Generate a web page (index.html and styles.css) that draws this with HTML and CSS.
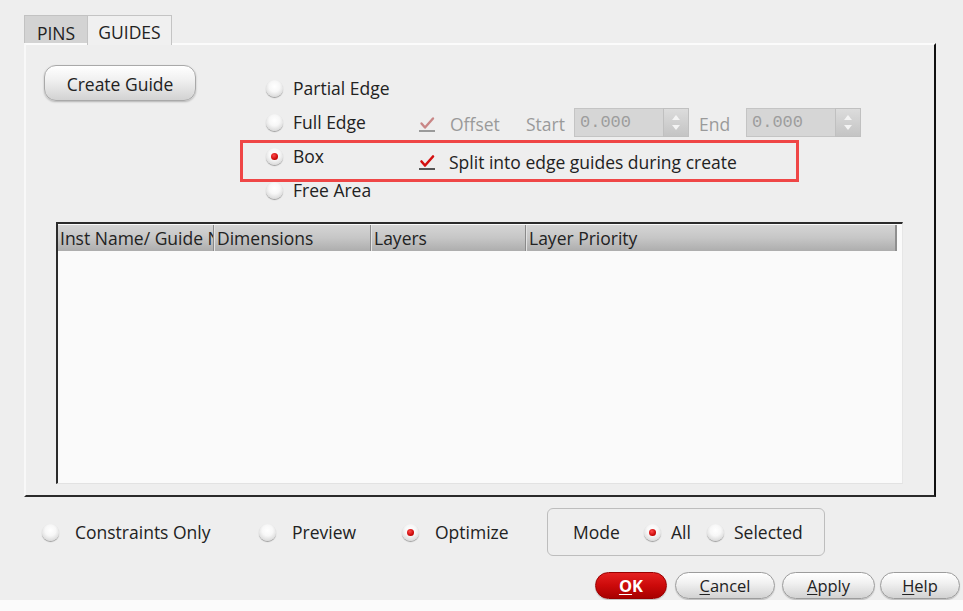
FILE: index.html
```html
<!DOCTYPE html>
<html>
<head>
<meta charset="utf-8">
<link rel="stylesheet" href="styles.css">
</head>
<body>
<div class="dialog">
  <div class="tabs">
    <div class="tab tab-off">PINS</div>
    <div class="tab tab-on">GUIDES</div>
  </div>
  <div class="panel">
    <div class="top">
      <button class="btn create">Create Guide</button>
      <div class="options">
        <div class="opt-row">
          <span class="radio-item"><span class="radio"></span>Partial Edge</span>
        </div>
        <div class="opt-row">
          <span class="radio-item wide"><span class="radio"></span>Full Edge</span>
          <span class="grp offset-grp">
            <span class="check dim"><svg width="18" height="18" viewBox="0 0 18 18"><rect x="1" y="15" width="16" height="2" fill="#9a9a9a"/><path d="M3.5 8.5 L7 12.5 L15 3.5" fill="none" stroke="#c98686" stroke-width="2.4" stroke-linecap="round" stroke-linejoin="round"/></svg></span>
            <span class="muted lbl-offset">Offset</span>
            <span class="muted lbl-start">Start</span>
            <span class="spin"><span class="spin-field">0.000</span><span class="spin-btn"><span class="up"></span><span class="down"></span></span></span>
            <span class="muted lbl-end">End</span>
            <span class="spin"><span class="spin-field">0.000</span><span class="spin-btn"><span class="up"></span><span class="down"></span></span></span>
          </span>
        </div>
        <div class="opt-row">
          <span class="radio-item wide"><span class="radio on"></span>Box</span>
          <span class="grp split-grp">
            <span class="check split"><svg width="18" height="18" viewBox="0 0 18 18"><rect x="1" y="15" width="16" height="2" fill="#555"/><path d="M3.5 8.5 L7 12.5 L15 3.5" fill="none" stroke="#d40f0f" stroke-width="2.6" stroke-linecap="round" stroke-linejoin="round"/></svg></span>
            <span>Split into edge guides during create</span>
          </span>
        </div>
        <div class="opt-row">
          <span class="radio-item"><span class="radio"></span>Free Area</span>
        </div>
        <div class="highlight"></div>
      </div>
    </div>
    <div class="table">
      <div class="thead">
        <div class="th c1">Inst Name/ Guide Name</div>
        <div class="th c2">Dimensions</div>
        <div class="th c3">Layers</div>
        <div class="th c4">Layer Priority</div>
      </div>
      <div class="tbody"></div>
    </div>
  </div>
  <div class="bottom">
    <span class="radio-item b1"><span class="radio"></span>Constraints Only</span>
    <span class="radio-item b2"><span class="radio"></span>Preview</span>
    <span class="radio-item b3"><span class="radio on"></span>Optimize</span>
    <div class="mode">
      <span class="mode-lbl">Mode</span>
      <span class="radio-item m1"><span class="radio on"></span>All</span>
      <span class="radio-item m2"><span class="radio"></span>Selected</span>
    </div>
  </div>
  <div class="actions">
    <button class="btn pill ok"><u>O</u>K</button>
    <button class="btn pill cancel"><u>C</u>ancel</button>
    <button class="btn pill apply"><u>A</u>pply</button>
    <button class="btn pill help"><u>H</u>elp</button>
  </div>
  <div class="strip"></div>
</div>
</body>
</html>
```
FILE: styles.css
```css
* { box-sizing: border-box; }
html, body { margin: 0; padding: 0; }
body {
  width: 963px;
  height: 611px;
  overflow: hidden;
  background: #eeeeee;
  font-family: "Open Sans", "Noto Sans", sans-serif;
  font-size: 17.5px;
  color: #222;
}
.dialog {
  padding-top: 15px;
  display: flex;
  flex-direction: column;
}
.tabs {
  display: flex;
  margin-left: 24px;
  height: 28px;
}
.tab {
  display: flex;
  align-items: center;
  justify-content: center;
  color: #222;
}
.tab-off {
  width: 63px;
  height: 28px;
  background: #d3d3d3;
  border-top: 1px solid #c2c2c2;
  border-left: 1px solid #c2c2c2;
  padding-top: 6px;
}
.tab-on {
  position: relative;
  z-index: 2;
  width: 85px;
  height: 30px;
  background: #f0f0f0;
  border: 1px solid #c4c4c4;
  border-bottom: none;
  padding-top: 3px;
}
.panel {
  margin-left: 24px;
  width: 912px;
  height: 454px;
  border-top: 2px solid #fbfbfb;
  border-left: 2px solid #f8f8f8;
  border-right: 2px solid #111;
  border-bottom: 2px solid #2a2a2a;
  display: flex;
  flex-direction: column;
}
.top {
  height: 177px;
  display: flex;
  align-items: flex-start;
}
.btn {
  font-family: "Open Sans", "Noto Sans", sans-serif;
  font-size: 17.5px;
  color: #222;
  border: 1px solid #a9a9a9;
  background: linear-gradient(#ffffff 0%, #f1f1f1 40%, #d2d2d2 100%);
  padding: 0;
  cursor: default;
}
.create {
  margin-left: 18px;
  margin-top: 20px;
  width: 152px;
  height: 36px;
  border-radius: 12px;
  box-shadow: 0 1px 2px rgba(0,0,0,0.25);
  padding-top: 2px;
}
.options {
  position: relative;
  margin-left: 70px;
  margin-top: 26px;
  display: flex;
  flex-direction: column;
}
.opt-row {
  height: 34px;
  display: flex;
  align-items: center;
  white-space: nowrap;
}
.grp {
  display: flex;
  align-items: center;
}
.offset-grp { margin-top: 4px; }
.split-grp { margin-top: 12px; }
.radio-item {
  display: flex;
  align-items: center;
  white-space: nowrap;
}
.radio-item .radio { margin-right: 10px; }
.radio-item.wide { width: 152px; }
.radio {
  position: relative;
  display: inline-block;
  flex: none;
  width: 17px;
  height: 17px;
  border-radius: 50%;
  background: radial-gradient(circle at 50% 38%, #ffffff 0%, #f7f7f7 40%, #dedede 72%, #a9a9a9 100%);
  box-shadow: 0 1px 1px rgba(0,0,0,0.35);
}
.radio.on::after {
  content: "";
  position: absolute;
  left: 5px;
  top: 5px;
  width: 7px;
  height: 7px;
  border-radius: 50%;
  background: radial-gradient(circle at 40% 35%, #ff4a4a, #c30000 70%, #8a0000);
}
.check {
  display: inline-flex;
  flex: none;
  width: 18px;
  height: 18px;
  margin-right: 14px;
}
.check.split { margin-right: 13px; }
.muted { color: #9a9a9a; }
.lbl-offset { width: 76px; }
.lbl-start { width: 48px; }
.lbl-end { width: 47px; margin-left: 10px; }
.spin {
  display: flex;
  flex: none;
  height: 29px;
  width: 115px;
  margin-top: -3px;
}
.spin-field {
  width: 89px;
  height: 29px;
  background: #d6d6d6;
  border: 1px solid #c4c4c4;
  border-right: none;
  font-family: "Liberation Mono", "DejaVu Sans Mono", monospace;
  font-size: 17px;
  color: #9d9d9d;
  padding-left: 5px;
  line-height: 27px;
}
.spin-btn {
  width: 26px;
  height: 29px;
  background: linear-gradient(#dcdcdc, #c4c4c4);
  border: 1px solid #c0c0c0;
  display: flex;
  flex-direction: column;
  align-items: center;
  justify-content: center;
  gap: 5px;
}
.up, .down {
  width: 0;
  height: 0;
  border-left: 4px solid transparent;
  border-right: 4px solid transparent;
}
.up { border-bottom: 5px solid #f4f4f4; }
.down { border-top: 5px solid #f4f4f4; }
.highlight {
  position: absolute;
  left: -26px;
  top: 69px;
  width: 559px;
  height: 42px;
  border: 3px solid #ef4646;
  pointer-events: none;
}
.table {
  margin-left: 30px;
  width: 847px;
  height: 262px;
  border-top: 2px solid #2b2b2b;
  border-left: 2px solid #2b2b2b;
  border-right: 1px solid #e6e6e6;
  border-bottom: 1px solid #e2e2e2;
  background: #fafafa;
  display: flex;
  flex-direction: column;
}
.thead {
  margin-top: 1px;
  width: 839px;
  height: 26px;
  display: flex;
  background: linear-gradient(#d5d5d5 0%, #c6c6c6 50%, #adadad 100%);
  border-right: 2px solid #8f8f8f;
}
.th {
  height: 26px;
  line-height: 26px;
  padding-left: 3px;
  white-space: nowrap;
  overflow: hidden;
  color: #222;
}
.th + .th { border-left: 1px solid #8a8a8a; box-shadow: inset 1px 0 0 #e2e2e2; }
.c1 { width: 155px; padding-left: 2px; }
.c2 { width: 157px; }
.c3 { width: 155px; }
.c4 { flex: 1; }
.tbody { flex: 1; }
.bottom {
  margin-top: 11px;
  height: 48px;
  display: flex;
  align-items: center;
  padding-left: 42px;
}
.bottom .radio-item .radio { margin-right: 16px; }
.b1 { width: 217px; }
.b2 { width: 143px; }
.b3 { width: 145px; }
.mode {
  width: 278px;
  height: 48px;
  border: 1px solid #bdbdbd;
  border-radius: 6px;
  display: flex;
  align-items: center;
  padding-left: 25px;
}
.mode-lbl { width: 71px; }
.mode .radio-item .radio { margin-right: 10px; }
.m1 { width: 63px; }
.actions {
  margin-top: 16px;
  height: 27px;
  display: flex;
  justify-content: flex-end;
  padding-right: 3px;
}
.pill {
  height: 27px;
  border-radius: 14px;
  border: 1px solid #9c9c9c;
  font-size: 16.5px;
  box-shadow: 0 1px 1px rgba(0,0,0,0.2);
  padding-bottom: 1px;
}
.pill u { text-decoration-thickness: 1px; text-underline-offset: 2px; }
.ok {
  width: 72px;
  background: linear-gradient(#e42020 0%, #cc0a0a 50%, #a80000 100%);
  border-color: #900;
  color: #fff;
  font-weight: bold;
}
.cancel { width: 100px; margin-left: 8px; }
.apply { width: 93px; margin-left: 7px; }
.help { width: 80px; margin-left: 5px; }
.strip {
  margin-top: 1px;
  height: 12px;
  background: #fbfbfb;
}
```
